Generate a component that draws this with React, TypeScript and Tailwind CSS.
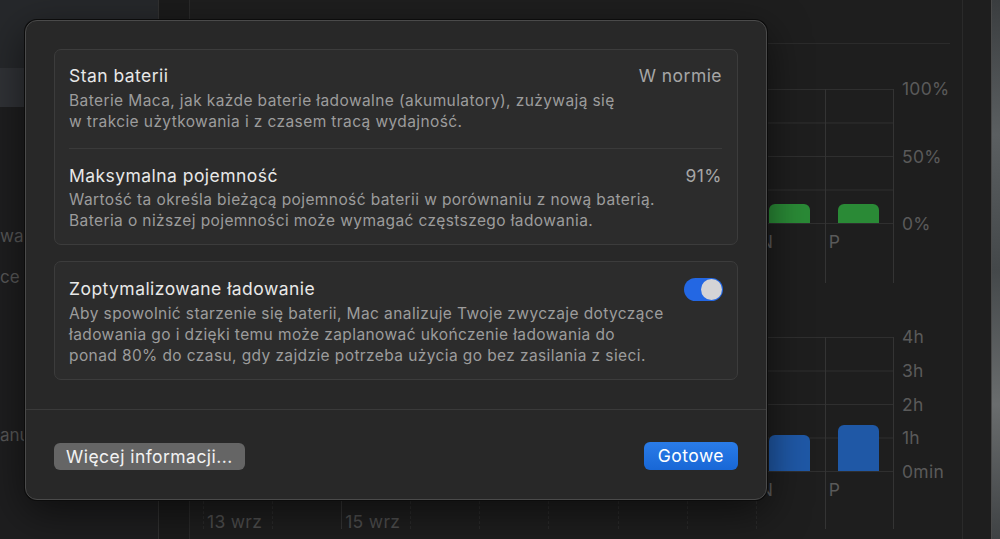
const days = [
  { letter: 'S', date: '13 wrz', monday: false, top: 0, bottom: 0 },
  { letter: 'N', date: '', monday: false, top: 0, bottom: 0 },
  { letter: 'P', date: '15 wrz', monday: true, top: 0, bottom: 0 },
  { letter: 'W', date: '', monday: false, top: 0, bottom: 0 },
  { letter: 'Ś', date: '', monday: false, top: 0, bottom: 0 },
  { letter: 'C', date: '', monday: false, top: 0, bottom: 0 },
  { letter: 'P', date: '', monday: false, top: 0, bottom: 0 },
  { letter: 'S', date: '', monday: false, top: 0, bottom: 0 },
  { letter: 'N', date: '', monday: false, top: 19, bottom: 36 },
  { letter: 'P', date: '', monday: true, top: 19, bottom: 46 },
];

const axis = 'text-[17.5px] leading-[20px] tracking-[0.3px] text-[#5a5a5a]';

function Column({ d, kind, last }: { d: (typeof days)[number]; kind: 'level' | 'usage'; last: boolean }) {
  const h = kind === 'level' ? d.top : d.bottom;
  return (
    <div
      className={`w-[69.1px] shrink-0 flex flex-col border-l ${d.monday ? 'border-solid border-[#343434]' : 'border-dashed border-[#2a2a2a]'} ${last ? 'border-r border-r-dashed border-r-[#343434]' : ''}`}
    >
      <div className="h-[135px] flex items-end pb-[1px] pl-[12px] bg-[linear-gradient(#2f2f2f_1px,transparent_1px)] bg-[length:100%_33.5px]">
        {h > 0 && (
          <div
            className={`w-[41px] rounded-t-[6px] ${kind === 'level' ? 'bg-[#2a8a36]' : 'bg-[#1f58a6]'}`}
            style={{ height: h }}
          />
        )}
      </div>
      {kind === 'level' ? (
        <div className={`h-[59px] pl-[3px] pt-[8px] ${axis}`}>{d.letter}</div>
      ) : (
        <div className={`h-[57px] pl-[3px] pt-[8px] flex flex-col gap-[12px] ${axis}`}>
          <span>{d.letter}</span>
          <span className="text-[#4e4e4e]">{d.date}</span>
        </div>
      )}
    </div>
  );
}

function AxisLabels({ labels }: { labels: string[] }) {
  return (
    <div className={`w-[67px] pl-[8px] h-[155px] -mt-[10px] flex flex-col justify-between ${axis}`}>
      {labels.map((l) => (
        <span key={l}>{l}</span>
      ))}
    </div>
  );
}

function Toggle() {
  return (
    <div className="w-[39px] h-[23px] rounded-full bg-[#2367e3] flex items-center justify-end pr-[1px] shrink-0">
      <div className="w-[21px] h-[21px] rounded-full bg-[#d4d4d6]" />
    </div>
  );
}

const title = 'text-[17.5px] leading-[22px] tracking-[0.45px]';
const desc = 'text-[15.5px] tracking-[0.4px] text-[#9c9c9c]';

export default function App() {
  return (
    <div className="relative w-[1000px] h-[539px] overflow-hidden bg-[#1e1e1e] flex font-['Inter',sans-serif]">
      {/* sidebar */}
      <div className="w-[159px] shrink-0 flex flex-col border-r border-[#313131]">
        <div className="h-[68px] bg-[#26282b]" />
        <div className="h-[39px] bg-[#303236]" />
        <div className="flex-1 bg-[#1e1e1f] text-[17px] text-[#575757] pt-[118px]">
          <div className="h-[22px] leading-[22px]">wan</div>
          <div className="mt-[19px] h-[22px] leading-[22px]">ce</div>
          <div className="mt-[136px] h-[22px] leading-[22px]">anu</div>
        </div>
      </div>
      <div className="w-[31px] shrink-0 bg-[#1b1b1b] border-r border-[#2a2a2a]" />

      {/* main */}
      <div className="w-[772px] shrink-0 flex flex-col">
        <div className="h-[44px] ml-[13px] mr-[12px] border-b border-[#2b2b2b]" />
        <div className="mt-[45px] pl-[13px] flex">
          {days.map((d, i) => (
            <Column key={i} d={d} kind="level" last={i === days.length - 1} />
          ))}
          <div>
            <div className={`w-[67px] h-[155px] -mt-[10px] pl-[8px] flex flex-col justify-between ${axis}`}>
              <span>100%</span>
              <span>50%</span>
              <span>0%</span>
            </div>
          </div>
        </div>
        <div className="mt-[54px] pl-[13px] flex">
          {days.map((d, i) => (
            <Column key={i} d={d} kind="usage" last={i === days.length - 1} />
          ))}
          <div>
            <AxisLabels labels={['4h', '3h', '2h', '1h', '0min']} />
          </div>
        </div>
      </div>

      <div className="w-[29px] shrink-0 border-l border-[#2a2a2a] bg-[#1e1e1e]" />
      <div className="flex-1 border-l border-[#4a4a4a] bg-[linear-gradient(180deg,#3a3d3f_0%,#5b5f61_25%,#44484a_50%,#6a6d6e_75%,#3f4244_100%)]" />

      {/* dialog sheet */}
      <div className="absolute left-[25px] top-[20px] w-[742px] h-[480px] rounded-[12px] bg-[#282828] border border-[#4a4a4a] shadow-[0_0_0_1px_#0c0c0c,0_12px_40px_rgba(0,0,0,0.55)] flex flex-col text-[#e8e8e8]">
        <div className="px-[28px] pt-[28px] flex flex-col gap-[16px]">
          <div className="rounded-[7px] bg-[#2c2c2c] border border-[#3c3c3c] pl-[14px] pr-[15px] pt-[15px] pb-[13px]">
            <div className="flex justify-between">
              <div className={title}>Stan baterii</div>
              <div className={`${title} text-[#a6a6a6]`}>W normie</div>
            </div>
            <div className={`mt-[3px] leading-[21px] ${desc}`}>
              Baterie Maca, jak każde baterie ładowalne (akumulatory), zużywają się
              <br />
              w trakcie użytkowania i z czasem tracą wydajność.
            </div>
            <div className="mt-[16px] border-t border-[#3a3a3a]" />
            <div className="mt-[16px] flex justify-between">
              <div className={title}>Maksymalna pojemność</div>
              <div className={`${title} text-[#a6a6a6]`}>91%</div>
            </div>
            <div className={`mt-[3px] leading-[20.5px] ${desc}`}>
              Wartość ta określa bieżącą pojemność baterii w porównaniu z nową baterią.
              <br />
              Bateria o niższej pojemności może wymagać częstszego ładowania.
            </div>
          </div>

          <div className="rounded-[7px] bg-[#2c2c2c] border border-[#3c3c3c] pl-[14px] pr-[14px] pt-[16px] pb-[13px]">
            <div className="flex justify-between">
              <div className={title}>Zoptymalizowane ładowanie</div>
              <Toggle />
            </div>
            <div className={`mt-[2px] leading-[21px] ${desc}`}>
              Aby spowolnić starzenie się baterii, Mac analizuje Twoje zwyczaje dotyczące
              <br />
              ładowania go i dzięki temu może zaplanować ukończenie ładowania do
              <br />
              ponad 80% do czasu, gdy zajdzie potrzeba użycia go bez zasilania z sieci.
            </div>
          </div>
        </div>

        <div className="mt-[29px] border-t border-[#3a3a3a]" />

        <div className="flex justify-between items-center px-[28px] pt-[32px]">
          <button className="h-[27px] px-[12px] rounded-[6px] bg-[#656565] text-[#f2f2f2] text-[17.5px] leading-[27px] tracking-[0.45px]">
            Więcej informacji...
          </button>
          <button className="h-[28px] px-[14px] rounded-[6px] bg-[linear-gradient(#2a7ce8,#1867d6)] text-white text-[17.5px] leading-[28px] tracking-[0.45px]">
            Gotowe
          </button>
        </div>
      </div>
    </div>
  );
}
